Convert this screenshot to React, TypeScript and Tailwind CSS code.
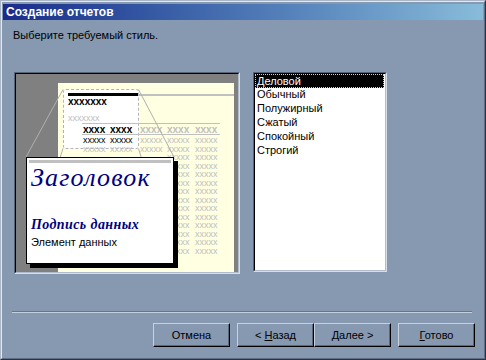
const grayRows = Array.from({ length: 14 });
const colW = ["w-[27px]", "w-[30px]", "w-[27px]", "w-[28px]", "w-[26px]"];

function PreviewPane() {
  return (
    <div className="w-[226px] h-[202px] border border-t-[#56647a] border-l-[#56647a] border-b-[#d6dee8] border-r-[#d6dee8]">
      <div className="h-full border border-t-black border-l-black border-b-[#b0bccc] border-r-[#b0bccc]">
        <div className="relative h-full overflow-hidden bg-[#808080]">
          {/* report page */}
          <div className="absolute left-[42px] top-[9px] right-[4px] bottom-0 bg-[#ffffe1]" />

          {/* zoom source area */}
          <div className="absolute left-[47px] top-[15px] w-[76px] h-[60px] rounded-[3px] border border-dashed border-[#b4b4b4] bg-white" />

          <div className="absolute left-[52px] top-[19px] w-[70px] h-[3px] bg-black" />
          <div className="absolute left-[122px] top-[20px] w-[96px] h-[2px] bg-[#c0c0c0]" />

          <div className="absolute left-[52px] top-[23px] text-[10px] leading-none font-bold">xxxxxxx</div>
          <div className="absolute left-[52px] top-[40px] text-[9px] leading-none text-[#c0c0c0]">xxxxxxx</div>

          <div className="absolute left-[66px] top-[49px] w-[138px] h-px bg-[#c0c0c0]" />
          <div className="absolute left-[67px] top-[51px] flex text-[10px] leading-none font-bold">
            <span className={colW[0]}>xxxx</span>
            <span className={colW[1]}>xxxx</span>
            <span className={colW[2] + " text-[#c0c0c0]"}>xxxx</span>
            <span className={colW[3] + " text-[#c0c0c0]"}>xxxx</span>
            <span className={colW[4] + " text-[#c0c0c0]"}>xxxx</span>
          </div>
          <div className="absolute left-[66px] top-[60px] w-[138px] h-px bg-[#c0c0c0]" />

          <div className="absolute left-[67px] top-[62px] flex flex-col text-[9px] leading-[8.5px]">
            {grayRows.map((_, r) =>
              r < 2 ? (
                <div key={r} className="flex h-[8.5px]">
                  {colW.map((w, c) => (
                    <span key={c} className={w + (r === 0 && c < 2 ? " text-black" : " text-[#c0c0c0]")}>
                      xxxxx
                    </span>
                  ))}
                </div>
              ) : (
                // rows behind the callout: only the last two columns peek out
                <div key={r} className="flex h-[8.5px] pl-[84px] text-[#c0c0c0]">
                  <span className={colW[3]}>xxxxx</span>
                  <span className={colW[4]}>xxxxx</span>
                </div>
              )
            )}
          </div>

          {/* zoom guide lines */}
          <svg className="absolute left-0 top-0" width="222" height="198">
            <g stroke="#b0b0b0" strokeWidth="1">
              <line x1="47" y1="15.5" x2="10" y2="83" />
              <line x1="122.5" y1="15.5" x2="158" y2="83" />
              <line x1="47" y1="74.5" x2="10" y2="190" />
              <line x1="122.5" y1="74.5" x2="158" y2="190" />
            </g>
          </svg>

          {/* callout */}
          <div className="absolute left-[10px] top-[83px] w-[148px] h-[107px] border border-black bg-white shadow-[4px_4px_0_#000]">
            <div className="mx-[2px] mt-[2px] h-[3px] bg-[#c0c0c0]" />
            <div className="mt-[2px] pl-[4px] font-['Liberation_Serif',serif] italic text-[26px] leading-[26px] tracking-[1.2px] text-[#000080]">
              Заголовок
            </div>
            <div className="mt-[26px] pl-[4px] font-['Liberation_Serif',serif] italic font-bold text-[14px] leading-[16px] tracking-[0.4px] text-[#000080]">
              Подпись данных
            </div>
            <div className="mt-[3px] pl-[4px] text-[11px] leading-[13px]">Элемент данных</div>
          </div>
        </div>
      </div>
    </div>
  );
}

const styles = ["Деловой", "Обычный", "Полужирный", "Сжатый", "Спокойный", "Строгий"];

function StyleList() {
  return (
    <div className="w-[134px] h-[200px] border border-t-[#56647a] border-l-[#56647a] border-b-[#d6dee8] border-r-[#d6dee8]">
      <div className="h-full border border-t-black border-l-black border-b-[#b0bccc] border-r-[#b0bccc] bg-white">
        {styles.map((s, i) =>
          i === 0 ? (
            <div key={s} className="h-[14px] mr-px border border-dotted border-[#d0d0d0] bg-black pl-px leading-[12px] text-white">
              {s}
            </div>
          ) : (
            <div key={s} className="h-[14px] pl-[2px] leading-[12px]">
              {s}
            </div>
          )
        )}
      </div>
    </div>
  );
}

function Btn({ children, className = "" }: { children: React.ReactNode; className?: string }) {
  return (
    <button
      className={
        "w-[77px] h-[24px] text-center leading-[20px] whitespace-pre border border-t-[#c8d2de] border-l-[#c8d2de] border-b-black border-r-black shadow-[inset_-1px_-1px_0_#5a687c] text-[11px] text-black " +
        className
      }
    >
      {children}
    </button>
  );
}

export default function App() {
  return (
    <div className="w-[486px] h-[360px] overflow-hidden bg-[#8798b1] border border-t-[#aab6c6] border-l-[#aab6c6] border-b-[#2b3341] border-r-[#2b3341] font-['Liberation_Sans',Arial,sans-serif] text-[11px] text-black">
      <div className="h-full border border-t-[#e2e9f1] border-l-[#e2e9f1] border-b-[#5f6e84] border-r-[#5f6e84] pt-[2px] px-px">
        <div className="h-[16px] bg-gradient-to-r from-[#1b2a8a] to-[#88bcd9] pl-[3px] text-white text-[12px] font-bold leading-[16px]">
          Создание отчетов
        </div>

        <p className="mt-[9px] ml-[10px] leading-[13px]">Выберите требуемый стиль.</p>

        <div className="mt-[30px] ml-[11px] flex items-start gap-[13px]">
          <PreviewPane />
          <StyleList />
        </div>

        <div className="mt-[37px] ml-[9px] w-[460px] border-t border-b border-t-[#66768c] border-b-[#c4d0de]" />

        <div className="mt-[10px] ml-[150px] flex">
          <Btn>Отмена</Btn>
          <Btn className="ml-[7px]">
            {"< "}
            <u>Н</u>азад
          </Btn>
          <Btn>
            <u>Д</u>
            {"алее >"}
          </Btn>
          <Btn className="ml-[7px]">
            <u>Г</u>отово
          </Btn>
        </div>
      </div>
    </div>
  );
}
